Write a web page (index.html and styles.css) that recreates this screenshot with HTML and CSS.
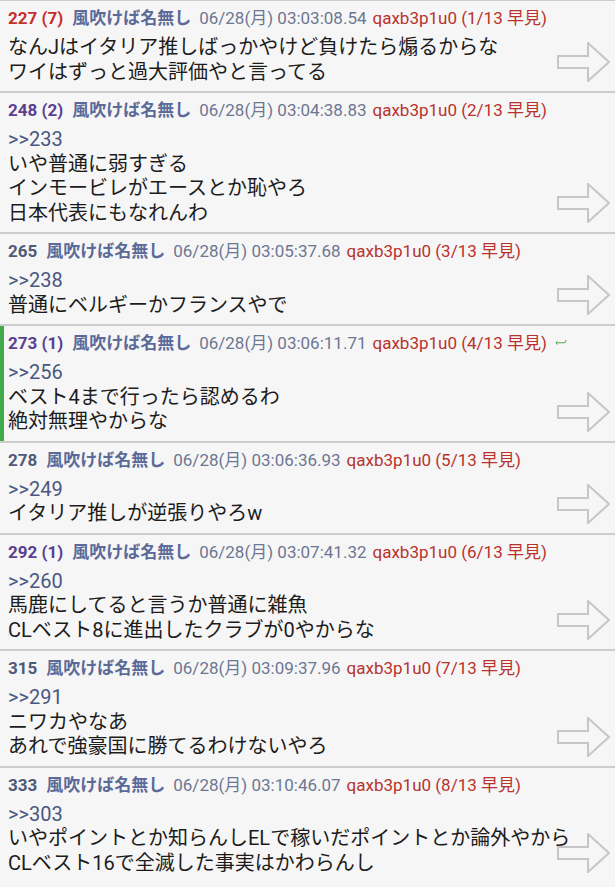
FILE: index.html
```html
<!DOCTYPE html>
<html lang="ja">
<head>
<meta charset="utf-8">
<title>thread</title>
<link rel="stylesheet" href="styles.css">
</head>
<body>
<div class="thread">
  <article class="post">
    <div class="head"><span class="num hot">227 (7)</span><span class="name">風吹けば名無し</span><span class="date">06/28(月) 03:03:08.54</span><span class="id">qaxb3p1u0 (1/13 早見)</span></div>
    <div class="body">なんJはイタリア推しばっかやけど負けたら煽るからな<br>ワイはずっと過大評価やと言ってる</div>
    <svg class="go" viewBox="0 0 54 40"><polygon points="1,14 31,14 31,1 52,20 31,39 31,26 1,26"/></svg>
  </article>
  <article class="post">
    <div class="head"><span class="num warm">248 (2)</span><span class="name">風吹けば名無し</span><span class="date">06/28(月) 03:04:38.83</span><span class="id">qaxb3p1u0 (2/13 早見)</span></div>
    <div class="body"><span class="ref">&gt;&gt;233</span><br>いや普通に弱すぎる<br>インモービレがエースとか恥やろ<br>日本代表にもなれんわ</div>
    <svg class="go" viewBox="0 0 54 40"><polygon points="1,14 31,14 31,1 52,20 31,39 31,26 1,26"/></svg>
  </article>
  <article class="post">
    <div class="head"><span class="num">265</span><span class="name">風吹けば名無し</span><span class="date">06/28(月) 03:05:37.68</span><span class="id">qaxb3p1u0 (3/13 早見)</span></div>
    <div class="body"><span class="ref">&gt;&gt;238</span><br>普通にベルギーかフランスやで</div>
    <svg class="go" viewBox="0 0 54 40"><polygon points="1,14 31,14 31,1 52,20 31,39 31,26 1,26"/></svg>
  </article>
  <article class="post marked">
    <div class="head"><span class="num warm">273 (1)</span><span class="name">風吹けば名無し</span><span class="date">06/28(月) 03:06:11.71</span><span class="id">qaxb3p1u0 (4/13 早見)</span><svg class="back" viewBox="0 0 12 7"><path d="M2.5 1 L1 2.8 L2.5 4.6 M1 2.8 H9 A1.9 1.9 0 0 0 9 -1" /></svg></div>
    <div class="body"><span class="ref">&gt;&gt;256</span><br>ベスト4まで行ったら認めるわ<br>絶対無理やからな</div>
    <svg class="go" viewBox="0 0 54 40"><polygon points="1,14 31,14 31,1 52,20 31,39 31,26 1,26"/></svg>
  </article>
  <article class="post">
    <div class="head"><span class="num">278</span><span class="name">風吹けば名無し</span><span class="date">06/28(月) 03:06:36.93</span><span class="id">qaxb3p1u0 (5/13 早見)</span></div>
    <div class="body"><span class="ref">&gt;&gt;249</span><br>イタリア推しが逆張りやろw</div>
    <svg class="go" viewBox="0 0 54 40"><polygon points="1,14 31,14 31,1 52,20 31,39 31,26 1,26"/></svg>
  </article>
  <article class="post">
    <div class="head"><span class="num warm">292 (1)</span><span class="name">風吹けば名無し</span><span class="date">06/28(月) 03:07:41.32</span><span class="id">qaxb3p1u0 (6/13 早見)</span></div>
    <div class="body"><span class="ref">&gt;&gt;260</span><br>馬鹿にしてると言うか普通に雑魚<br>CLベスト8に進出したクラブが0やからな</div>
    <svg class="go" viewBox="0 0 54 40"><polygon points="1,14 31,14 31,1 52,20 31,39 31,26 1,26"/></svg>
  </article>
  <article class="post">
    <div class="head"><span class="num">315</span><span class="name">風吹けば名無し</span><span class="date">06/28(月) 03:09:37.96</span><span class="id">qaxb3p1u0 (7/13 早見)</span></div>
    <div class="body"><span class="ref">&gt;&gt;291</span><br>ニワカやなあ<br>あれで強豪国に勝てるわけないやろ</div>
    <svg class="go" viewBox="0 0 54 40"><polygon points="1,14 31,14 31,1 52,20 31,39 31,26 1,26"/></svg>
  </article>
  <article class="post">
    <div class="head"><span class="num">333</span><span class="name">風吹けば名無し</span><span class="date">06/28(月) 03:10:46.07</span><span class="id">qaxb3p1u0 (8/13 早見)</span></div>
    <div class="body"><span class="ref">&gt;&gt;303</span><br>いやポイントとか知らんしELで稼いだポイントとか論外やから<br>CLベスト16で全滅した事実はかわらんし</div>
    <svg class="go" viewBox="0 0 54 40"><polygon points="1,14 31,14 31,1 52,20 31,39 31,26 1,26"/></svg>
  </article>
</div>
</body>
</html>
```
FILE: styles.css
```css
html, body {
  margin: 0;
  padding: 0;
  background: #f6f6f6;
}

body {
  font-family: Roboto, "Noto Sans CJK JP", sans-serif;
  overflow: hidden;
}

.thread {
  margin-top: -1px;
}

.post {
  position: relative;
  border-top: 2px solid #cdcdcd;
  padding: 6px 8px 7px 8px;
}

.post.marked {
  box-shadow: inset 4px 0 0 #3fab4b;
}

.head {
  display: flex;
  align-items: center;
  font-size: 17px;
  line-height: 22px;
  white-space: nowrap;
}

.num {
  font-weight: 700;
  color: #4f5a77;
  margin-right: 9px;
}

.num.hot {
  color: #c62f2a;
}

.num.warm {
  color: #5b3f8f;
}

.name {
  font-weight: 700;
  color: #5b6a98;
  margin-right: 8px;
}

.date {
  color: #6d7692;
  margin-right: 6px;
}

.id {
  color: #b9322d;
}

.back {
  width: 12px;
  height: 7px;
  margin-left: 8px;
  fill: none;
  stroke: #4caf50;
  stroke-width: 1;
}

.body {
  margin-top: 6px;
  font-size: 20px;
  line-height: 24.5px;
  color: #1c1c1c;
}

.ref {
  color: #4a5781;
}

.go {
  position: absolute;
  right: 4px;
  bottom: 9px;
  width: 54px;
  height: 40px;
  fill: none;
  stroke: #c6c6c6;
  stroke-width: 2;
}
```
